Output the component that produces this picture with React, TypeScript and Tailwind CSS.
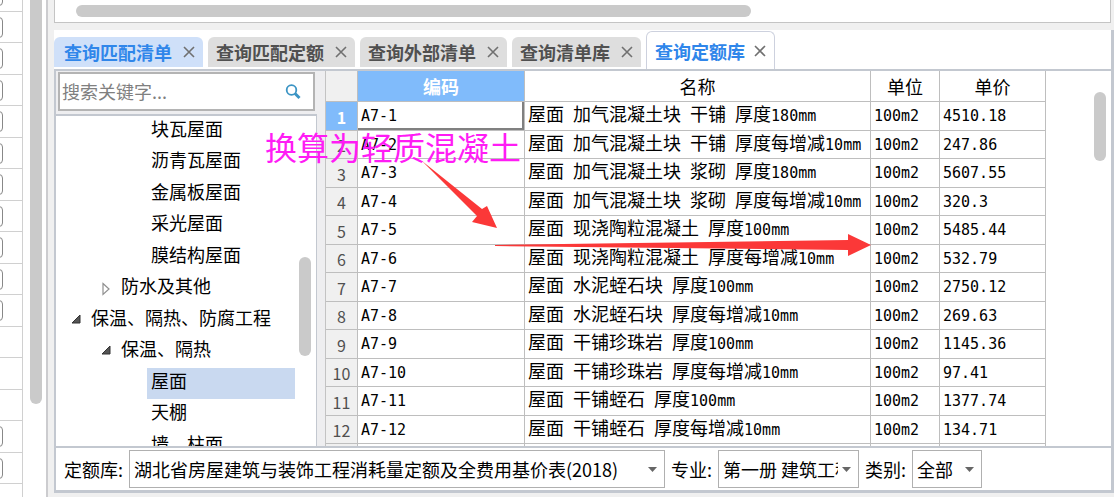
import { useState } from "react";

interface TreeItem {
  label: string;
  indent: string;
  state?: "open" | "closed";
}

interface Quota {
  code: string;
  name: string;
  unit: string;
  price: string;
}

const tabs = ["查询匹配清单", "查询匹配定额", "查询外部清单", "查询清单库", "查询定额库"];

const treeItems: TreeItem[] = [
  { label: "块瓦屋面", indent: "pl-[91px]" },
  { label: "沥青瓦屋面", indent: "pl-[91px]" },
  { label: "金属板屋面", indent: "pl-[91px]" },
  { label: "采光屋面", indent: "pl-[91px]" },
  { label: "膜结构屋面", indent: "pl-[91px]" },
  { label: "防水及其他", indent: "pl-[45px]", state: "closed" },
  { label: "保温、隔热、防腐工程", indent: "pl-[15px]", state: "open" },
  { label: "保温、隔热", indent: "pl-[45px]", state: "open" },
  { label: "屋面", indent: "pl-[91px]" },
  { label: "天棚", indent: "pl-[91px]" },
  { label: "墙、柱面", indent: "pl-[91px]" },
];

const quotas: Quota[] = [
  { code: "A7-1", name: "屋面 加气混凝土块 干铺 厚度180mm", unit: "100m2", price: "4510.18" },
  { code: "A7-2", name: "屋面 加气混凝土块 干铺 厚度每增减10mm", unit: "100m2", price: "247.86" },
  { code: "A7-3", name: "屋面 加气混凝土块 浆砌 厚度180mm", unit: "100m2", price: "5607.55" },
  { code: "A7-4", name: "屋面 加气混凝土块 浆砌 厚度每增减10mm", unit: "100m2", price: "320.3" },
  { code: "A7-5", name: "屋面 现浇陶粒混凝土 厚度100mm", unit: "100m2", price: "5485.44" },
  { code: "A7-6", name: "屋面 现浇陶粒混凝土 厚度每增减10mm", unit: "100m2", price: "532.79" },
  { code: "A7-7", name: "屋面 水泥蛭石块 厚度100mm", unit: "100m2", price: "2750.12" },
  { code: "A7-8", name: "屋面 水泥蛭石块 厚度每增减10mm", unit: "100m2", price: "269.63" },
  { code: "A7-9", name: "屋面 干铺珍珠岩 厚度100mm", unit: "100m2", price: "1145.36" },
  { code: "A7-10", name: "屋面 干铺珍珠岩 厚度每增减10mm", unit: "100m2", price: "97.41" },
  { code: "A7-11", name: "屋面 干铺蛭石 厚度100mm", unit: "100m2", price: "1377.74" },
  { code: "A7-12", name: "屋面 干铺蛭石 厚度每增减10mm", unit: "100m2", price: "134.71" },
];

// Rows of the bill list that have a tick box at their right end
const billRows = [
  true, true, true, true, true, true, true, true, true, true, true,
  false, false, false, true, true, false,
];

// Latin runs are half as wide as a Chinese character
function MixedText({ text }: { text: string }) {
  const parts = text.split(/([\x20-\x7e]+)/).filter(Boolean);
  return (
    <>
      {parts.map((part, i) =>
        /^[\x20-\x7e]/.test(part) ? (
          <span key={i} className="text-[15px] leading-none font-['DejaVu_Sans_Mono',monospace]">
            {part}
          </span>
        ) : (
          <span key={i}>{part}</span>
        )
      )}
    </>
  );
}

function CloseIcon() {
  return (
    <svg width="12" height="12" viewBox="0 0 12 12" stroke="#707070" strokeWidth="1.6" fill="none">
      <path d="M1 1L11 11M11 1L1 11" />
    </svg>
  );
}

function TreeArrow({ state }: { state?: "open" | "closed" }) {
  if (state === "open") {
    return (
      <svg width="10" height="10" viewBox="0 0 10 10" className="mt-2">
        <path d="M9 1V9H1Z" fill="#555" stroke="#333" />
      </svg>
    );
  }
  if (state === "closed") {
    return (
      <svg width="10" height="14" viewBox="0 0 10 14" className="mt-2">
        <path d="M2 1.5L8 7L2 12.5Z" fill="#fff" stroke="#909090" strokeWidth="1.2" />
      </svg>
    );
  }
  return null;
}

interface PickerProps {
  id: string;
  label: string;
  options: string[];
  width: string;
}

function Picker({ id, label, options, width }: PickerProps) {
  return (
    <>
      <label htmlFor={id} className="shrink-0 whitespace-nowrap">
        {label}
      </label>
      <div className={`relative shrink-0 ${width}`}>
        <select
          id={id}
          className="block h-[38px] w-full appearance-none border border-[#b0b0b0] bg-white pl-1 pr-5 text-black outline-none"
        >
          {options.map((option) => (
            <option key={option}>{option}</option>
          ))}
        </select>
        <svg
          width="9"
          height="5"
          viewBox="0 0 9 5"
          className="pointer-events-none absolute right-2 top-[17px]"
        >
          <path d="M0 0H9L4.500 5Z" fill="#666" />
        </svg>
      </div>
    </>
  );
}

export default function App() {
  const [activeTab, setActiveTab] = useState(4);
  const [selectedNode, setSelectedNode] = useState("屋面");
  const [selectedRow, setSelectedRow] = useState(0);

  return (
    <div className="relative flex h-screen overflow-hidden bg-white text-[18px] text-black font-['Noto_Sans_CJK_SC',sans-serif]">
      {/* Bill list */}
      <div className="flex w-[46px] shrink-0 overflow-hidden">
        <ul className="-mt-5 w-[23px] shrink-0 overflow-hidden border-r border-[#d0d0d0]">
          {billRows.map((checkable, i) => (
            <li key={i} className="h-8 border-b border-[#d0d0d0] pt-[5px] even:h-[31px]">
              {checkable && (
                <input
                  type="checkbox"
                  aria-label={`清单 ${i + 1}`}
                  className="-ml-[18px] block h-[21px] w-[21px] appearance-none rounded border border-[#888] bg-white"
                />
              )}
            </li>
          ))}
        </ul>
        <div className="ml-[7px] h-[404px] w-3 shrink-0 rounded-b-full bg-[#cacaca]" />
      </div>

      {/* Detail area */}
      <div className="flex min-w-0 flex-1 flex-col border-l-2 border-[#cccccf] bg-[#f0f0f0]">
        <div className="ml-1.5 mr-[3px] h-[23px] shrink-0 border-x border-b border-[#c4c4c4] bg-white pl-[21px] pt-[5px]">
          <div className="h-3 w-[675px] rounded-full bg-[#cacaca]" />
        </div>

        <div className="ml-1.5 mt-[7px] shrink-0 border-r-[3px] border-[#c3c8d0] bg-white">
          {/* Tabs */}
          <div role="tablist" className="flex h-[39px] items-end gap-[5px]">
            {tabs.map((tab, i) => {
              const look =
                i === activeTab
                  ? "h-[38px] gap-[9px] rounded-t-md border border-b-0 border-[#cdd1de] bg-white px-2 text-[#2f86ea]"
                  : i === 0
                    ? "mb-0.5 h-[30px] gap-[11px] rounded-t-md bg-[#cfe0f9] px-2 pl-2.5 text-[#2f86ea]"
                    : "mb-0.5 h-[30px] gap-[11px] rounded-t-md bg-[#dedede] px-2 text-[#505050]";
              return (
                <button
                  key={tab}
                  type="button"
                  role="tab"
                  aria-selected={i === activeTab}
                  onClick={() => setActiveTab(i)}
                  className={`flex shrink-0 items-center font-bold leading-[26px] ${look}`}
                >
                  {tab}
                  <CloseIcon />
                </button>
              );
            })}
          </div>

          <div className="flex border-y-2 border-l-2 border-[#c3c8d0]">
            {/* Chapter tree */}
            <div className="flex w-[261px] shrink-0 flex-col bg-[#eeeef0]">
              <label className="mx-0.5 mt-px flex h-[39px] items-center border-2 border-[#b4b4b4] bg-white pl-0.5 pr-3">
                <input
                  type="text"
                  aria-label="搜索"
                  placeholder="搜索关键字..."
                  className="min-w-0 flex-1 outline-none placeholder:text-[#808080]"
                />
                <svg width="16" height="16" viewBox="0 0 16 16" fill="none" stroke="#3b94c4">
                  <circle cx="6.500" cy="6" r="4.800" strokeWidth="1.8" />
                  <path d="M10 9.500L14.500 14" strokeWidth="3" />
                </svg>
              </label>
              <div className="mt-[3px] flex min-h-0 grow basis-0 overflow-hidden border-r border-t-2 border-[#c3c8d0] bg-white">
                <ul className="w-[239px] shrink-0">
                  {treeItems.map((item) => (
                    <li key={item.label} className={`flex h-8 odd:h-[31px] ${item.indent}`}>
                      {item.state && (
                        <span className="flex w-5 shrink-0 items-start pt-px">
                          <TreeArrow state={item.state} />
                        </span>
                      )}
                      <button
                        type="button"
                        onClick={() => setSelectedNode(item.label)}
                        className={`flex h-full flex-1 items-start text-left leading-6 whitespace-nowrap ${
                          item.state ? "pl-0" : "pl-1"
                        } ${selectedNode === item.label ? "bg-[#c9d9f0]" : ""}`}
                      >
                        {item.label}
                      </button>
                    </li>
                  ))}
                </ul>
                <div className="ml-1 mt-[141px] h-[99px] w-3 rounded-full bg-[#cacaca]" />
              </div>
            </div>

            {/* Quota grid */}
            <div className="w-2 shrink-0 bg-[#eeeef0]" />
            <div className="flex min-w-0 flex-1 items-start overflow-hidden border-l border-[#c3c3c3] bg-white">
              <table className="w-[720px] shrink-0 table-fixed border-separate border-spacing-0">
                <colgroup>
                  <col className="w-8" />
                  <col className="w-[167px]" />
                  <col className="w-[346px]" />
                  <col className="w-[69px]" />
                  <col className="w-[106px]" />
                </colgroup>
                <thead>
                  <tr className="h-[31px] leading-[28px] [&>th]:border-b [&>th]:border-r [&>th]:border-[#bebebe] [&>th]:p-0">
                    <th className="bg-[#f0f0f0]" />
                    <th className="bg-[#80bbfb] font-bold text-white">编码</th>
                    <th className="font-normal">名称</th>
                    <th className="font-normal">单位</th>
                    <th className="font-normal">单价</th>
                  </tr>
                </thead>
                <tbody>
                  {quotas.map((quota, i) => (
                    <tr
                      key={quota.code}
                      onClick={() => setSelectedRow(i)}
                      className="h-[28px] whitespace-nowrap leading-[22px] odd:h-[29px] [&>*]:border-b [&>*]:border-r [&>*]:border-[#bebebe] [&>*]:p-0 [&>td]:pl-[3px] [&>td]:align-top"
                    >
                      <th
                        className={`align-bottom text-base leading-[26px] ${
                          i === selectedRow
                            ? "bg-[#80bbfb] font-bold text-white"
                            : "bg-[#f0f0f0] font-normal text-[#505050]"
                        }`}
                      >
                        {i + 1}
                      </th>
                      <td className={i === selectedRow ? "shadow-[inset_-2px_-2px_0_#808080]" : ""}>
                        <MixedText text={quota.code} />
                      </td>
                      <td>
                        <MixedText text={quota.name} />
                      </td>
                      <td>
                        <MixedText text={quota.unit} />
                      </td>
                      <td>
                        <MixedText text={quota.price} />
                      </td>
                    </tr>
                  ))}
                  <tr className="h-0.5 [&>*]:border-r [&>*]:border-[#bebebe] [&>*]:p-0">
                    <th className="bg-[#f0f0f0]" />
                    <td />
                    <td />
                    <td />
                    <td />
                  </tr>
                </tbody>
              </table>
              <div className="ml-auto mr-[5px] mt-[21px] h-[69px] w-3 shrink-0 rounded-full bg-[#cacaca]" />
            </div>
          </div>

          {/* Filters */}
          <div className="flex items-center gap-1.5 border-b-[3px] border-l-2 border-[#c3c8d0] py-0.5 pl-2 leading-[26px]">
            <Picker
              id="library"
              label="定额库:"
              options={["湖北省房屋建筑与装饰工程消耗量定额及全费用基价表(2018)"]}
              width="w-[536px]"
            />
            <Picker id="major" label="专业:" options={["第一册 建筑工程"]} width="w-[141px]" />
            <Picker id="category" label="类别:" options={["全部"]} width="w-[70px]" />
          </div>
        </div>
      </div>

      {/* Annotation */}
      <p className="absolute left-[265px] top-[126px] text-[32px] leading-10 text-[#ff1cf5]">
        换算为轻质混凝土
      </p>
      <svg
        width="460"
        height="110"
        viewBox="0 0 460 110"
        fill="#fb3838"
        className="pointer-events-none absolute left-[415px] top-[155px]"
      >
        <path d="M7 6L67 54L72 51L82 73L57 67L62 61Z" />
        <path d="M80 90L433 85V79L456 90L433 101V95L80 91Z" />
      </svg>
    </div>
  );
}
